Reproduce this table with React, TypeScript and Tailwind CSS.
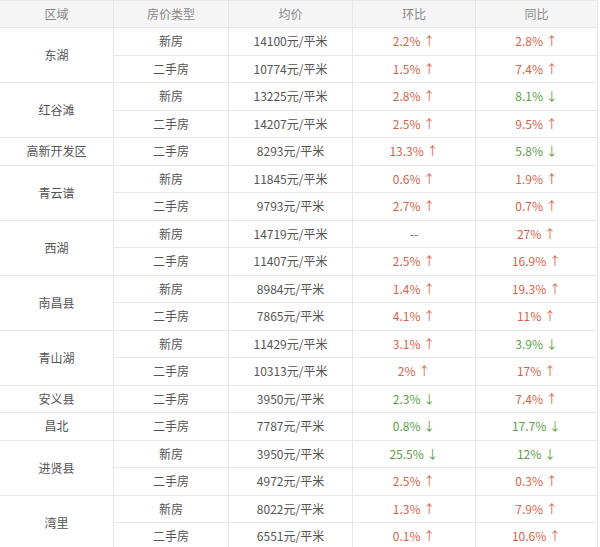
type Row = { type: string; price: string; hb: string; tb: string };
type Group = { area: string; rows: Row[] };

const groups: Group[] = [
  { area: "东湖", rows: [
    { type: "新房", price: "14100", hb: "2.2%↑", tb: "2.8%↑" },
    { type: "二手房", price: "10774", hb: "1.5%↑", tb: "7.4%↑" },
  ] },
  { area: "红谷滩", rows: [
    { type: "新房", price: "13225", hb: "2.8%↑", tb: "8.1%↓" },
    { type: "二手房", price: "14207", hb: "2.5%↑", tb: "9.5%↑" },
  ] },
  { area: "高新开发区", rows: [
    { type: "二手房", price: "8293", hb: "13.3%↑", tb: "5.8%↓" },
  ] },
  { area: "青云谱", rows: [
    { type: "新房", price: "11845", hb: "0.6%↑", tb: "1.9%↑" },
    { type: "二手房", price: "9793", hb: "2.7%↑", tb: "0.7%↑" },
  ] },
  { area: "西湖", rows: [
    { type: "新房", price: "14719", hb: "--", tb: "27%↑" },
    { type: "二手房", price: "11407", hb: "2.5%↑", tb: "16.9%↑" },
  ] },
  { area: "南昌县", rows: [
    { type: "新房", price: "8984", hb: "1.4%↑", tb: "19.3%↑" },
    { type: "二手房", price: "7865", hb: "4.1%↑", tb: "11%↑" },
  ] },
  { area: "青山湖", rows: [
    { type: "新房", price: "11429", hb: "3.1%↑", tb: "3.9%↓" },
    { type: "二手房", price: "10313", hb: "2%↑", tb: "17%↑" },
  ] },
  { area: "安义县", rows: [
    { type: "二手房", price: "3950", hb: "2.3%↓", tb: "7.4%↑" },
  ] },
  { area: "昌北", rows: [
    { type: "二手房", price: "7787", hb: "0.8%↓", tb: "17.7%↓" },
  ] },
  { area: "进贤县", rows: [
    { type: "新房", price: "3950", hb: "25.5%↓", tb: "12%↓" },
    { type: "二手房", price: "4972", hb: "2.5%↑", tb: "0.3%↑" },
  ] },
  { area: "湾里", rows: [
    { type: "新房", price: "8022", hb: "1.3%↑", tb: "7.9%↑" },
    { type: "二手房", price: "6551", hb: "0.1%↑", tb: "10.6%↑" },
  ] },
];

function Change({ v }: { v: string }) {
  if (v === "--") return <span className="text-[#666]">--</span>;
  const up = v.endsWith("↑");
  const num = v.slice(0, -1);
  return (
    <span className={up ? "text-[#d4644a]" : "text-[#5e9e45]"}>
      {num} {up ? "↑" : "↓"}
    </span>
  );
}

const cell = "border border-[#e8e8e8] text-center align-middle p-0";

export default function App() {
  return (
    <div className="w-[600px] h-[547px] overflow-hidden bg-white text-[12px] text-[#555] font-['Microsoft_YaHei','Noto_Sans_CJK_SC',sans-serif]">
      <table className="table-fixed border-collapse w-[598px] -ml-px">
        <colgroup>
          <col className="w-[114px]" />
          <col className="w-[115px]" />
          <col className="w-[124px]" />
          <col className="w-[123px]" />
          <col className="w-[122px]" />
        </colgroup>
        <thead>
          <tr className="h-[27px] bg-[#f5f5f5] text-[#888]">
            <th className={`${cell} font-normal`}>区域</th>
            <th className={`${cell} font-normal`}>房价类型</th>
            <th className={`${cell} font-normal`}>均价</th>
            <th className={`${cell} font-normal`}>环比</th>
            <th className={`${cell} font-normal`}>同比</th>
          </tr>
        </thead>
        <tbody>
          {groups.map((g) =>
            g.rows.map((r, i) => (
              <tr key={g.area + r.type} className="h-[27.5px]">
                {i === 0 && (
                  <td className={cell} rowSpan={g.rows.length}>
                    {g.area}
                  </td>
                )}
                <td className={cell}>{r.type}</td>
                <td className={cell}>{r.price}元/平米</td>
                <td className={cell}>
                  <Change v={r.hb} />
                </td>
                <td className={cell}>
                  <Change v={r.tb} />
                </td>
              </tr>
            ))
          )}
        </tbody>
      </table>
    </div>
  );
}
